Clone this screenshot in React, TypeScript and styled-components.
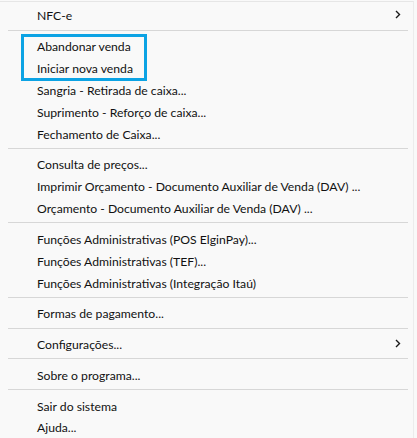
import React from "react";
import styled, { createGlobalStyle } from "styled-components";

const Global = createGlobalStyle`
  html, body { margin: 0; padding: 0; background: #f9f9f9; }
  body { font-family: "Segoe UI", Lato, "Noto Sans", sans-serif; }
`;

const Menu = styled.div`
  position: relative;
  width: 414px;
  height: 437px;
  margin-top: 1px;
  border-top: 1px solid #e6e6e6;
  border-right: 1px solid #ececec;
  background: #f9f9f9;
  padding-top: 2px;
  box-sizing: border-box;
  display: flex;
  flex-direction: column;
`;

const Item = styled.div`
  height: 22px;
  display: flex;
  align-items: center;
  padding-left: 37px;
  padding-right: 12px;
  font-size: 12.2px;
  color: #111;
  white-space: nowrap;
`;

const Label = styled.span`
  flex: 1;
  padding-top: 2px;
`;

const Separator = styled.div`
  height: 9px;
  display: flex;
  align-items: center;
  padding: 0 5px 0 8px;
  &::after {
    content: "";
    flex: 1;
    height: 1px;
    background: #d7d7d7;
  }
`;

const Highlight = styled.div`
  position: absolute;
  left: 21px;
  top: 32px;
  width: 126px;
  height: 47px;
  border: 3px solid #0ca3e4;
  box-sizing: border-box;
  pointer-events: none;
`;

const Chevron = () => (
  <svg width="6" height="9" viewBox="0 0 6 9">
    <path d="M1 1 L4.5 4.5 L1 8" fill="none" stroke="#1a1a1a" strokeWidth="1.4" />
  </svg>
);

type Entry = string | null | { label: string; sub: true };

const entries: Entry[] = [
  { label: "NFC-e", sub: true },
  null,
  "Abandonar venda",
  "Iniciar nova venda",
  "Sangria - Retirada de caixa...",
  "Suprimento - Reforço de caixa...",
  "Fechamento de Caixa...",
  null,
  "Consulta de preços...",
  "Imprimir Orçamento - Documento Auxiliar de Venda (DAV) ...",
  "Orçamento - Documento Auxiliar de Venda (DAV) ...",
  null,
  "Funções Administrativas (POS ElginPay)...",
  "Funções Administrativas (TEF)...",
  "Funções Administrativas (Integração Itaú)",
  null,
  "Formas de pagamento...",
  null,
  { label: "Configurações...", sub: true },
  null,
  "Sobre o programa...",
  null,
  "Sair do sistema",
  "Ajuda...",
];

export default function App() {
  return (
    <>
      <Global />
      <Menu>
        {entries.map((e, i) => {
          if (e === null) return <Separator key={i} />;
          if (typeof e === "string")
            return (
              <Item key={i}>
                <Label>{e}</Label>
              </Item>
            );
          return (
            <Item key={i}>
              <Label>{e.label}</Label>
              <Chevron />
            </Item>
          );
        })}
        <Highlight />
      </Menu>
    </>
  );
}
